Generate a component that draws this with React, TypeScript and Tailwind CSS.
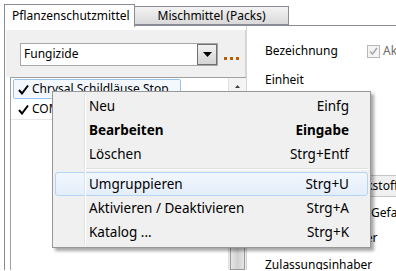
import React from "react"

const font = { fontFamily: '"Noto Sans", "Open Sans", sans-serif' }

const Check = () => (
  <svg width="11" height="11" viewBox="0 0 11 11" className="shrink-0">
    <path d="M1 6 L4 9.5 L10 1.5" fill="none" stroke="#000" strokeWidth="2" />
  </svg>
)

const MenuItem = ({ label, keys, bold, active }: { label: string; keys: string; bold?: boolean; active?: boolean }) => (
  <div
    className={
      "flex items-center h-[24px] mx-[2px] rounded-[3px] border " +
      (active ? "border-[#b5d3f3] bg-gradient-to-b from-[#f2f7fd] to-[#e3eefb]" : "border-transparent")
    }
  >
    <div className="w-[31px] shrink-0" />
    <div className={"flex-1 pl-[2px] " + (bold ? "font-bold" : "")}>{label}</div>
    <div className={"pr-[18px] " + (bold ? "font-bold" : "")}>{keys}</div>
  </div>
)

export default function App() {
  return (
    <div className="relative w-[396px] h-[271px] overflow-hidden bg-white text-[12px] text-black" style={font}>
      {/* tabs */}
      <div className="flex items-end h-[26px] pl-[4px] pt-[3px]">
        <div className="h-[23px] w-[131px] border border-b-0 border-[#898c95] bg-white pl-[7px] leading-[21px] relative z-10 -mb-px">
          Pflanzenschutzmittel
        </div>
        <div className="h-[19px] w-[154px] border border-l-0 border-[#898c95] bg-gradient-to-b from-[#f3f3f3] to-[#d9d9d9] text-center leading-[17px] mb-[1px]">
          Mischmittel (Packs)
        </div>
      </div>

      <div className="flex h-[245px] ml-[4px] border-t border-l border-[#898c95] -mt-px">
        {/* left side */}
        <div className="flex flex-col w-[241px] shrink-0 pt-[4px] pl-[1px]">
          <div className="flex items-center h-[47px] bg-[#f0f0f0] border-r border-[#d5d5d5] pl-[14px]">
            <div className="flex items-center h-[23px] w-[198px] bg-white border border-[#a6a6a6] mt-[1px]">
              <div className="flex-1 pl-[3px]">Fungizide</div>
              <div className="flex items-center justify-center w-[20px] h-[21px] border border-[#707070] bg-gradient-to-b from-[#f2f2f2] to-[#d4d4d4]">
                <svg width="9" height="5" viewBox="0 0 9 5">
                  <path d="M0 0 H9 L4.5 5 Z" fill="#000" />
                </svg>
              </div>
            </div>
            <div className="flex gap-[3px] ml-[6px] mt-[10px]">
              <div className="w-[3px] h-[3px] bg-[#b85e00]" />
              <div className="w-[3px] h-[3px] bg-[#b85e00]" />
              <div className="w-[3px] h-[3px] bg-[#b85e00]" />
            </div>
          </div>
          <div className="flex flex-1 ml-[4px] border-l border-t border-[#a0a0a0] bg-white">
            <div className="flex-1 flex flex-col pt-[1px]">
              <div className="flex items-center gap-[3px] h-[20px] w-[168px] ml-[2px] pl-[4px] rounded-[2px] border border-[#99c4ee] bg-[#f3f8fe]">
                <Check />
                <span>Chrysal Schildläuse Stop</span>
              </div>
              <div className="flex items-center gap-[3px] h-[21px] pl-[7px] border-b border-[#e8e8e8]">
                <Check />
                <span>COMPO Pilzfrei</span>
              </div>
            </div>
            <div className="w-[18px] bg-[#eaeaea] border-l border-[#e0e0e0] flex flex-col">
              <div className="h-[17px] flex items-center justify-center bg-[#f4f4f4]">
                <svg width="5" height="3" viewBox="0 0 5 3">
                  <path d="M0 3 L2.5 0 L5 3 Z" fill="#404040" />
                </svg>
              </div>
              <div className="flex-1" />
              <div className="h-[30px] mx-[1px] border border-[#9a9a9a] bg-gradient-to-r from-[#e6e6e6] via-[#d0d0d0] to-[#e6e6e6]" />
            </div>
          </div>
        </div>

        {/* right side */}
        <div className="flex-1 min-w-0 flex flex-col pl-[18px] pt-[13px] border-l border-[#d5d5d5] overflow-hidden whitespace-nowrap">
          <div className="flex items-center h-[24px] shrink-0">
            <div className="w-[102px] shrink-0">Bezeichnung</div>
            <div className="w-[13px] h-[13px] shrink-0 border border-[#b8b8b8] bg-[#f4f4f4] flex items-center justify-center">
              <svg width="9" height="9" viewBox="0 0 9 9">
                <path d="M1 4.5 L3.5 7 L8 1" fill="none" stroke="#a8a8a8" strokeWidth="1.6" />
              </svg>
            </div>
            <div className="ml-[3px] text-[#6d6d6d]">Aktiv</div>
          </div>
          <div className="h-[22px] flex items-center mt-[6px] shrink-0">Einheit</div>
          <div className="h-[84px] shrink-0" />
          <div className="flex h-[22px] -ml-[12px] border border-[#c5c5c5] shrink-0">
            <div className="w-[89px] shrink-0 bg-white" />
            <div className="flex-1 bg-[#f0f0f0] border-l border-[#c5c5c5] pl-[3px] leading-[20px]">Wirkstoff</div>
          </div>
          <div className="flex h-[30px] items-center pt-[2px] shrink-0">
            <div className="w-[106px] shrink-0">Einstufung</div>
            <div>Gefahrstoff</div>
          </div>
          <div className="flex h-[22px] items-center shrink-0">Zulassungsnummer</div>
          <div className="flex h-[28px] items-center pt-[4px] shrink-0">Zulassungsinhaber</div>
        </div>
      </div>

      {/* context menu */}
      <div className="absolute left-[52px] top-[91px] w-[319px] h-[157px] bg-[#f0f0f0] border border-[#979797] shadow-[3px_3px_3px_rgba(0,0,0,0.35)] py-[2px] flex flex-col text-[13.5px]">
        <div className="absolute left-[31px] top-[2px] bottom-[2px] border-l border-[#e2e3e3] bg-white" style={{ width: 2 }} />
        <MenuItem label="Neu" keys="Einfg" />
        <MenuItem label="Bearbeiten" keys="Eingabe" bold />
        <MenuItem label="Löschen" keys="Strg+Entf" />
        <div className="h-[6px] flex items-center ml-[33px] mr-[2px]">
          <div className="w-full border-t border-[#e0e0e0] border-b border-b-white" />
        </div>
        <MenuItem label="Umgruppieren" keys="Strg+U" active />
        <MenuItem label="Aktivieren / Deaktivieren" keys="Strg+A" />
        <MenuItem label="Katalog ..." keys="Strg+K" />
      </div>
    </div>
  )
}
